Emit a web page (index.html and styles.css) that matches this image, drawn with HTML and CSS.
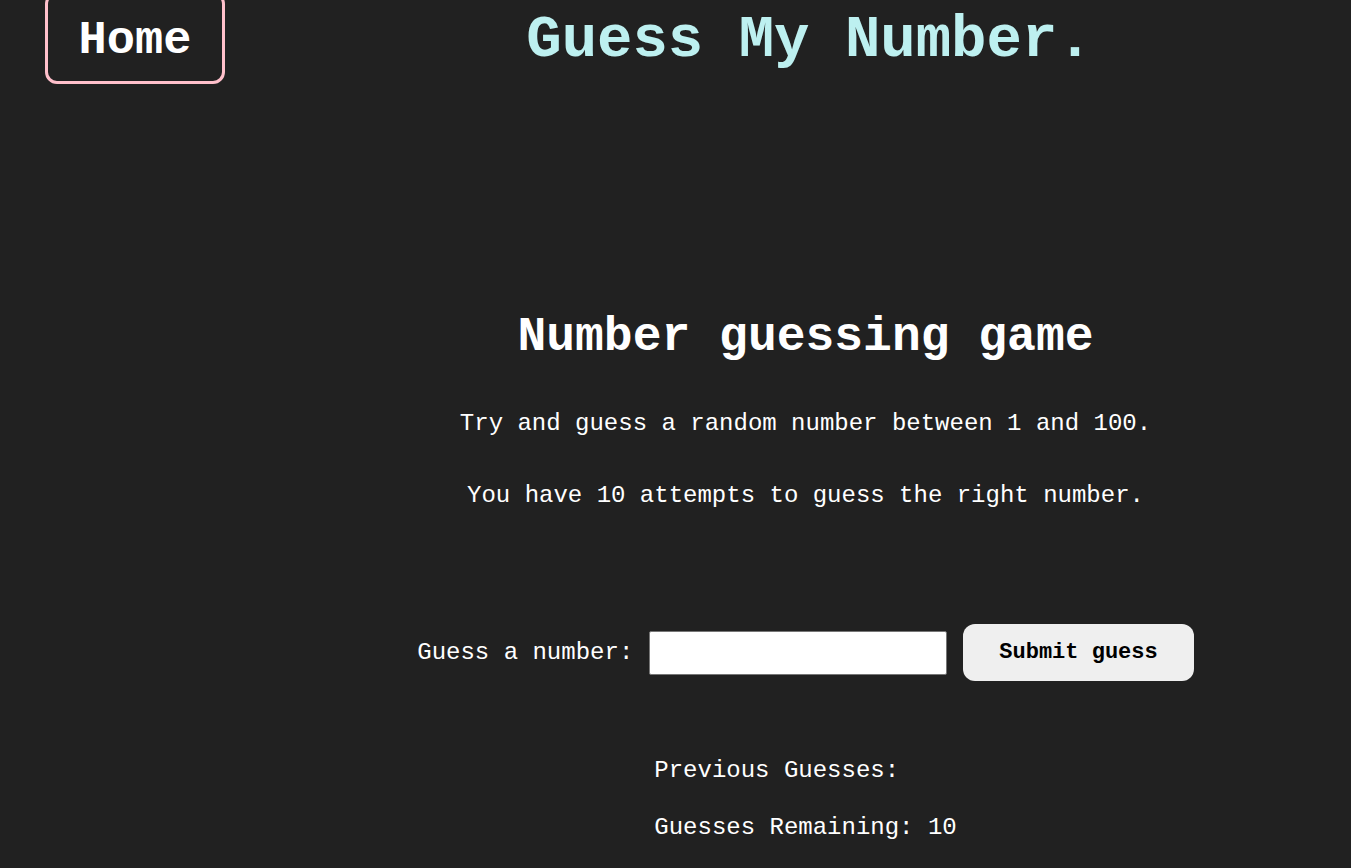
FILE: index.html
```html
<!DOCTYPE html>
<html lang="en">
<head>
<meta charset="utf-8">
<title>Guess My Number.</title>
<link rel="stylesheet" href="styles.css">
</head>
<body>
<div class="page">
  <aside class="side">
    <a class="home-btn" href="#">Home</a>
  </aside>
  <div class="content">
    <header class="top">
      <h1 class="site-title">Guess My Number.</h1>
    </header>
    <main class="game">
      <h2 class="game-title">Number guessing game</h2>
      <p class="intro">Try and guess a random number between 1 and 100.</p>
      <p class="intro">You have 10 attempts to guess the right number.</p>
      <form class="guess-form" onsubmit="return false;">
        <label class="guess-label" for="guessField">Guess a number:</label>
        <input class="guess-field" id="guessField" type="number">
        <button class="guess-submit" type="submit">Submit guess</button>
      </form>
      <div class="results">
        <p class="result-line">Previous Guesses:</p>
        <p class="result-line">Guesses Remaining: 10</p>
      </div>
    </main>
  </div>
</div>
</body>
</html>
```
FILE: styles.css
```css
html, body {
  margin: 0;
  padding: 0;
  background: #212121;
  color: #ffffff;
  font-family: "Liberation Mono", "Courier New", monospace;
}

.page {
  display: grid;
  grid-template-columns: 260px 1fr;
  min-height: 868px;
}

.side {
  padding-left: 45px;
}

.home-btn {
  display: block;
  width: 180px;
  box-sizing: border-box;
  margin-top: -8px;
  height: 92px;
  padding-top: 8px;
  line-height: 76px;
  text-align: center;
  border: 3px solid #ffc0cb;
  border-radius: 12px;
  color: #ffffff;
  font-weight: bold;
  font-size: 47px;
  text-decoration: none;
}

.content {
  display: flex;
  flex-direction: column;
  align-items: center;
}

.top {
  align-self: stretch;
  text-align: center;
  padding-left: 8px;
}

.site-title {
  margin: 0;
  padding-top: 5px;
  font-size: 59px;
  line-height: 72px;
  color: #bdf0f0;
  font-weight: bold;
}

.game {
  display: flex;
  flex-direction: column;
  align-items: center;
  padding-top: 232px;
}

.game-title {
  margin: 0;
  font-size: 48px;
  line-height: 56px;
  font-weight: bold;
}

.intro {
  margin: 38px 0 0;
  font-size: 24px;
  line-height: 42px;
}

.intro + .intro {
  margin-top: 30px;
}

.guess-form {
  display: flex;
  align-items: center;
  margin-top: 107px;
  gap: 16px;
}

.guess-label {
  font-size: 24px;
}

.guess-field {
  width: 298px;
  height: 44px;
  box-sizing: border-box;
  border: 1px solid #767676;
  border-radius: 2px;
  background: #ffffff;
  margin: 0;
}

.guess-submit {
  height: 57px;
  padding: 0 36px;
  border: none;
  border-radius: 12px;
  background: #efefef;
  color: #000000;
  font-family: "Liberation Mono", "Courier New", monospace;
  font-weight: bold;
  font-size: 22px;
}

.results {
  margin-top: 73px;
  align-self: center;
}

.result-line {
  margin: 0 0 24px;
  font-size: 24px;
  line-height: 33px;
}
```
